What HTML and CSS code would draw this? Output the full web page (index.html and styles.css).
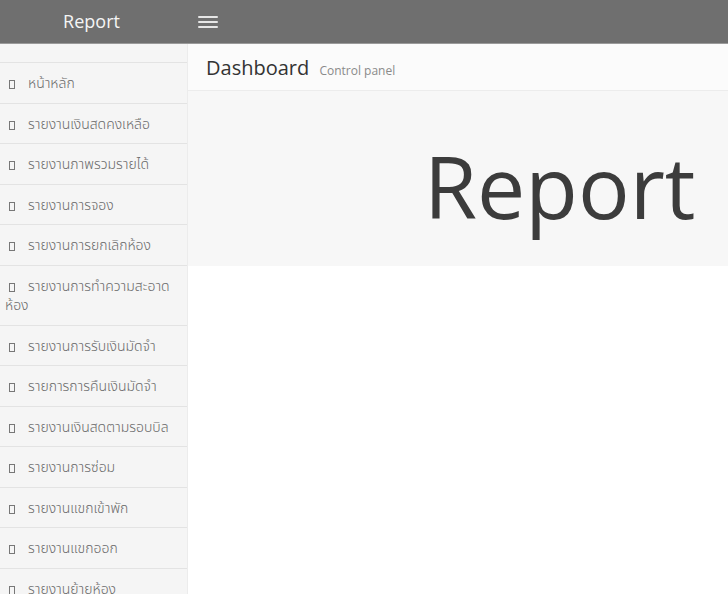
FILE: index.html
```html
<!DOCTYPE html>
<html lang="th">
<head>
  <meta charset="UTF-8">
  <meta name="viewport" content="width=device-width, initial-scale=1.0">
  <title>Report</title>
  <link rel="stylesheet" href="styles.css">
</head>
<body>
  <header class="topbar">
    <div class="brand">Report</div>
    <button class="menu-toggle" aria-label="Toggle menu">
      <span></span><span></span><span></span>
    </button>
  </header>

  <div class="layout">
    <aside class="sidebar">
      <ul class="nav">
        <li><a href="#"><i class="box"></i>หน้าหลัก</a></li>
        <li><a href="#"><i class="box"></i>รายงานเงินสดคงเหลือ</a></li>
        <li><a href="#"><i class="box"></i>รายงานภาพรวมรายได้</a></li>
        <li><a href="#"><i class="box"></i>รายงานการจอง</a></li>
        <li><a href="#"><i class="box"></i>รายงานการยกเลิกห้อง</a></li>
        <li><a href="#"><i class="box"></i>รายงานการทำความสะอาดห้อง</a></li>
        <li><a href="#"><i class="box"></i>รายงานการรับเงินมัดจำ</a></li>
        <li><a href="#"><i class="box"></i>รายการการคืนเงินมัดจำ</a></li>
        <li><a href="#"><i class="box"></i>รายงานเงินสดตามรอบบิล</a></li>
        <li><a href="#"><i class="box"></i>รายงานการซ่อม</a></li>
        <li><a href="#"><i class="box"></i>รายงานแขกเข้าพัก</a></li>
        <li><a href="#"><i class="box"></i>รายงานแขกออก</a></li>
        <li><a href="#"><i class="box"></i>รายงานย้ายห้อง</a></li>
      </ul>
    </aside>

    <main class="content">
      <div class="content-header">
        <h1>Dashboard <small>Control panel</small></h1>
      </div>
      <section class="hero">
        <div class="hero-title">Report</div>
      </section>
    </main>
  </div>
</body>
</html>
```

FILE: styles.css
```css
:root {
  --bar: #6f6f6f;
  --side-bg: #f5f5f5;
  --line: #e3e3e3;
  --text: #555555;
  --text-dark: #333333;
}

* {
  margin: 0;
  padding: 0;
  box-sizing: border-box;
}

html, body {
  height: 100%;
  overflow: hidden;
}

body {
  font-family: "Open Sans", "Noto Sans", "Noto Sans Thai", "Loma", "Garuda", sans-serif;
  font-weight: 300;
  color: var(--text);
  background: #ffffff;
}

.topbar {
  height: 44px;
  display: flex;
  align-items: center;
  background: var(--bar);
  border-bottom: 1px solid #9a9a9a;
}

.brand {
  width: 183px;
  text-align: center;
  color: #f5f5f5;
  font-size: 18px;
  font-weight: 400;
  padding-bottom: 2px;
}

.menu-toggle {
  margin-left: 15px;
  width: 20px;
  height: 16px;
  display: flex;
  flex-direction: column;
  justify-content: space-between;
  padding: 2px 0;
  background: none;
  border: none;
}

.menu-toggle span {
  display: block;
  height: 2px;
  border-radius: 1px;
  background: #e6e6e6;
}

.layout {
  display: flex;
  height: calc(100% - 44px);
}

.sidebar {
  width: 188px;
  flex-shrink: 0;
  background: var(--side-bg);
  border-right: 1px solid #ececec;
  padding-top: 18px;
}

.nav {
  list-style: none;
  border-top: 1px solid var(--line);
}

.nav li {
  border-bottom: 1px solid var(--line);
}

.nav a {
  display: block;
  padding: 10px 10px 10px 5px;
  font-size: 14px;
  line-height: 19.5px;
  color: #6a6a6a;
  text-decoration: none;
}

.box {
  display: inline-block;
  width: 6px;
  height: 9px;
  border: 1px solid #777777;
  margin: 0 13px 0 4px;
  vertical-align: -1px;
}

.content {
  flex: 1;
  min-width: 0;
}

.content-header {
  height: 47px;
  background: #fbfbfb;
  border-bottom: 1px solid #ececec;
  padding: 11px 0 0 18px;
}

.content-header h1 {
  font-size: 20px;
  font-weight: 400;
  color: var(--text-dark);
  line-height: 26px;
}

.content-header small {
  font-size: 12px;
  color: #8a8a8a;
  margin-left: 5px;
}

.hero {
  height: 175px;
  background: #f7f7f7;
  padding-left: 236px;
  white-space: nowrap;
}

.hero-title {
  font-size: 86px;
  font-weight: 400;
  color: #3c3c3c;
  line-height: 190px;
}
```
